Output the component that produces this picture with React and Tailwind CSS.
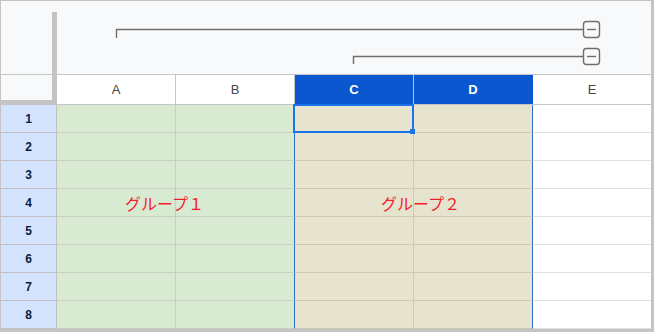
import React from "react";

const rows = [1, 2, 3, 4, 5, 6, 7, 8];

// fixed class lookup per column so Tailwind sees every name
const headCls = {
  A: "w-[119px] border-r border-[#c4c7c5] bg-white text-[#444746] font-normal",
  B: "w-[119px] border-r border-[#c4c7c5] bg-white text-[#444746] font-normal",
  C: "w-[119px] border-r border-[#a8c7fa] bg-[#0b57d0] text-white font-bold",
  D: "w-[119px] border-r border-[#0b57d0] bg-[#0b57d0] text-white font-bold",
  E: "w-[118px] bg-white text-[#444746] font-normal",
};

const cellCls = {
  A: "w-[119px] bg-[#d9ead3] border-r border-b border-[#c3d1bf]",
  B: "w-[119px] bg-[#d9ead3] border-b border-[#c3d1bf] border-r border-r-[#2a6fd6]",
  C: "w-[119px] bg-[#e6e3cf] border-r border-b border-[#cdc9b5]",
  D: "w-[119px] bg-[#e6e3cf] border-b border-[#cdc9b5] border-r border-r-[#2a6fd6]",
  E: "w-[118px] bg-white border-b border-[#e1e1e1]",
};

function GroupLines() {
  return (
    <svg width="594" height="73" viewBox="0 0 594 73" fill="none">
      <g stroke="#6f6f6f" strokeWidth="1.4">
        <path d="M59.5 37V28.5H526" />
        <rect x="526.5" y="20.5" width="16" height="16" rx="3" />
        <path d="M530 28.5H539" />
        <path d="M296.5 63V55.5H526" />
        <rect x="526.5" y="47.5" width="16" height="16" rx="3" />
        <path d="M530 55.5H539" />
      </g>
    </svg>
  );
}

function Cell({ col, row }) {
  const isSel = col === "C" && row === 1;
  return (
    <div className={`relative h-[28px] ${cellCls[col]}`}>
      {row === 4 && col === "A" && (
        <span className="relative z-10 flex h-full items-center whitespace-nowrap pl-[68px] text-[16px] text-[#ee1f2b] [font-family:'Noto_Sans_CJK_JP',sans-serif]">
          グループ１
        </span>
      )}
      {row === 4 && col === "C" && (
        <span className="relative z-10 flex h-full items-center whitespace-nowrap pl-[86px] text-[16px] text-[#ee1f2b] [font-family:'Noto_Sans_CJK_JP',sans-serif]">
          グループ２
        </span>
      )}
      {isSel && (
        <div className="absolute -left-[2px] -top-px z-20 h-[29px] w-[121px] border-2 border-[#1a73e8]">
          <div className="absolute -bottom-[3px] -right-[3px] h-[5px] w-[5px] bg-[#1a73e8]" />
        </div>
      )}
    </div>
  );
}

export default function App() {
  return (
    <div className="h-[333px] w-[655px] bg-white [font-family:'Liberation_Sans',Arial,sans-serif]">
      <div className="h-[332px] w-[654px] border-l border-t border-r-[3px] border-b-[3px] border-[#c4c4c4]">
        {/* group area + column headers */}
        <div className="flex">
          <div className="flex w-[56px]">
            <div className="flex w-[51px] flex-col">
              <div className="h-[73px] bg-[#f8f9fa]" />
              <div className="h-px bg-[#c4c7c5]" />
              <div className="h-[25px] bg-[#f8f9fa]" />
              <div className="h-[5px] bg-[#c4c4c4]" />
            </div>
            <div className="flex w-[5px] flex-col">
              <div className="h-[11px] bg-[#f8f9fa]" />
              <div className="flex-1 bg-[#c4c4c4]" />
            </div>
          </div>
          <div className="flex w-[594px] flex-col">
            <div className="h-[73px] bg-[#f8f9fa]">
              <GroupLines />
            </div>
            <div className="h-px bg-[#c4c7c5]" />
            <div className="flex h-[30px] border-b border-[#c4c7c5]">
              {["A", "B", "C", "D", "E"].map((c) => (
                <div key={c} className={`flex h-[29px] items-center justify-center text-[13px] ${headCls[c]}`}>
                  {c}
                </div>
              ))}
            </div>
          </div>
        </div>

        {/* rows */}
        {rows.map((r) => (
          <div key={r} className="flex">
            <div className="flex h-[28px] w-[56px] items-center justify-center border-r border-b border-[#c0c0c0] bg-[#d3e3fd] text-[12px] font-bold text-[#0b1d3a]">
              {r}
            </div>
            {["A", "B", "C", "D", "E"].map((c) => (
              <Cell key={c} col={c} row={r} />
            ))}
          </div>
        ))}
      </div>
    </div>
  );
}
